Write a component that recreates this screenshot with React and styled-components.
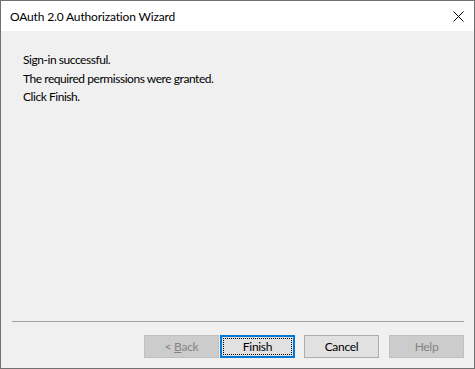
import React from "react"
import styled, { createGlobalStyle } from "styled-components"

const GlobalStyle = createGlobalStyle`
  html, body {
    margin: 0;
    padding: 0;
    background: #f0f0f0;
  }
  * {
    box-sizing: border-box;
  }
`

const Window = styled.div`
  width: 475px;
  height: 369px;
  border: 1px solid #717171;
  background: #f0f0f0;
  display: flex;
  flex-direction: column;
  font-family: "Segoe UI", "Lato", "Liberation Sans", sans-serif;
  font-size: 12px;
  font-variant-ligatures: none;
  color: #000;
`

const TitleBar = styled.div`
  height: 30px;
  background: #ffffff;
  display: flex;
  align-items: center;
  justify-content: space-between;
  padding-left: 9px;
`

const Title = styled.div`
  font-size: 12px;
  letter-spacing: -0.15px;
  padding-top: 1px;
`

const CloseButton = styled.div`
  height: 30px;
  display: flex;
  align-items: center;
  justify-content: center;
  margin-right: 10px;
`

const Body = styled.div`
  flex: 1;
  padding: 20px 22px 0;
  letter-spacing: -0.45px;
`

const Line = styled.div`
  line-height: 18.5px;
`

const Footer = styled.div`
  padding: 0 10px 10px 11px;
`

const Separator = styled.div`
  height: 1px;
  background: #a0a0a0;
`

const ButtonRow = styled.div`
  display: flex;
  justify-content: flex-end;
  margin-top: 13px;
`

const Button = styled.div`
  width: 75px;
  height: 23px;
  display: flex;
  align-items: center;
  justify-content: center;
  margin-left: ${p => p.$gap || 0}px;
  letter-spacing: -0.3px;
  white-space: pre;
  background: ${p => (p.$disabled ? "#cccccc" : "#e1e1e1")};
  color: ${p => (p.$disabled ? "#838383" : "#000")};
  border: ${p =>
    p.$default ? "2px solid #0078d7" : p.$disabled ? "1px solid #bfbfbf" : "1px solid #adadad"};
  position: relative;
  u {
    text-decoration: underline;
  }
`

const FocusRing = styled.div`
  position: absolute;
  inset: 1px;
  border: 1px dotted #000;
`

export default () => {
  return (
    <>
      <GlobalStyle />
      <Window>
        <TitleBar>
          <Title>OAuth 2.0 Authorization Wizard</Title>
          <CloseButton>
            <svg width="11" height="11" viewBox="0 0 11 11">
              <path d="M0.5 0.5 L10.5 10.5 M10.5 0.5 L0.5 10.5" stroke="#000" strokeWidth="1" fill="none" />
            </svg>
          </CloseButton>
        </TitleBar>
        <Body>
          <Line>Sign-in successful.</Line>
          <Line>The required permissions were granted.</Line>
          <Line>Click Finish.</Line>
        </Body>
        <Footer>
          <Separator />
          <ButtonRow>
            <Button $disabled>
              {"< "}
              <u>B</u>ack
            </Button>
            <Button $default $gap={1}>
              <FocusRing />
              Finish
            </Button>
            <Button $gap={9}>Cancel</Button>
            <Button $disabled $gap={10}>
              Help
            </Button>
          </ButtonRow>
        </Footer>
      </Window>
    </>
  )
}
